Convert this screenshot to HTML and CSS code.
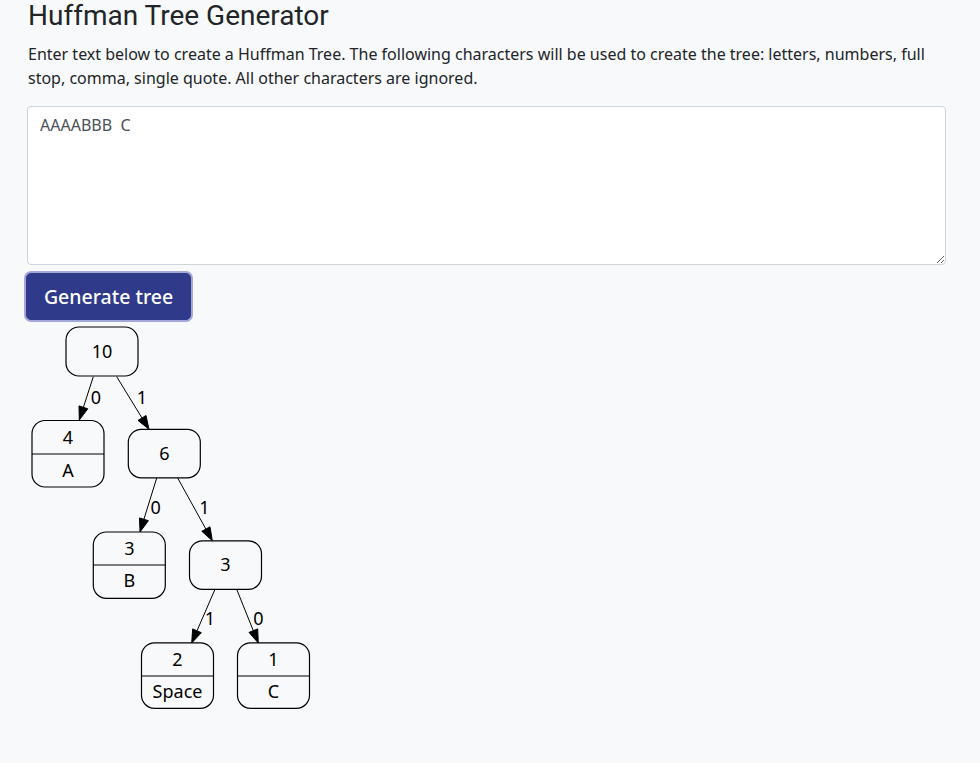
FILE: index.html
```html
<!DOCTYPE html>
<html lang="en">
<head>
<meta charset="utf-8">
<title>Huffman Tree Generator</title>
<link rel="stylesheet" href="styles.css">
</head>
<body>
<main class="page">
  <h1 class="title">Huffman Tree Generator</h1>
  <p class="intro">Enter text below to create a Huffman Tree. The following characters will be used to create the tree: letters, numbers, full stop, comma, single quote. All other characters are ignored.</p>
  <textarea class="input">AAAABBB  C</textarea>
  <div class="actions">
    <button class="btn" type="button">Generate tree</button>
  </div>
  <svg class="tree" width="320" height="400" viewBox="0 0 320 400" xmlns="http://www.w3.org/2000/svg">
    <g transform="translate(-27,-323)">
      <g class="edges">
        <line x1="93.3" y1="376.7" x2="83.4" y2="407.3"/>
        <polygon points="87.8,408.8 79.3,420 79,405.9"/>
        <line x1="116.7" y1="376.7" x2="142" y2="418"/>
        <polygon points="146,415.5 149,429.3 138,420.4"/>
        <line x1="156.7" y1="478" x2="143.9" y2="519.3"/>
        <polygon points="148.4,520.7 140,532 139.5,517.9"/>
        <line x1="177.7" y1="478" x2="205.9" y2="529.1"/>
        <polygon points="210,526.8 212.3,540.7 201.8,531.3"/>
        <line x1="215" y1="589.3" x2="197" y2="630.8"/>
        <polygon points="201.3,632.7 191.7,643 192.7,628.9"/>
        <line x1="236.7" y1="589.3" x2="253.3" y2="630.7"/>
        <polygon points="257.7,628.9 258.3,643 249,632.4"/>
      </g>
      <g class="labels">
        <text x="96" y="403.5">0</text>
        <text x="142" y="403.5">1</text>
        <text x="155.7" y="514">0</text>
        <text x="204.3" y="514">1</text>
        <text x="210" y="625">1</text>
        <text x="258.3" y="625">0</text>
      </g>
      <g class="nodes">
        <rect x="66" y="327" width="72" height="49" rx="13"/>
        <text x="102" y="358">10</text>

        <rect x="32" y="420.5" width="72" height="66.5" rx="13"/>
        <line x1="32" y1="454" x2="104" y2="454"/>
        <text x="68" y="443.5">4</text>
        <text x="68" y="476.5">A</text>

        <rect x="128.3" y="429.3" width="72" height="48.5" rx="13"/>
        <text x="164.3" y="459.5">6</text>

        <rect x="93.3" y="532" width="72" height="66.3" rx="13"/>
        <line x1="93.3" y1="565" x2="165.3" y2="565"/>
        <text x="129.3" y="555">3</text>
        <text x="129.3" y="587">B</text>

        <rect x="189.5" y="540.8" width="72" height="48.5" rx="13"/>
        <text x="225.5" y="571">3</text>

        <rect x="141.5" y="642.8" width="72" height="65.5" rx="13"/>
        <line x1="141.5" y1="676" x2="213.5" y2="676"/>
        <text x="177.5" y="665.5">2</text>
        <text x="177.5" y="697.5">Space</text>

        <rect x="237.5" y="642.8" width="72" height="65.5" rx="13"/>
        <line x1="237.5" y1="676" x2="309.5" y2="676"/>
        <text x="273.5" y="665.5">1</text>
        <text x="273.5" y="697.5">C</text>
      </g>
    </g>
  </svg>
</main>
</body>
</html>
```

FILE: styles.css
```css
html, body {
  margin: 0;
  padding: 0;
  background: #f8f9fa;
}

body {
  font-family: "Noto Sans", "Open Sans", sans-serif;
  color: #212529;
}

.page {
  padding: 0 34px 0 27px;
  display: flex;
  flex-direction: column;
  align-items: flex-start;
}

.title {
  font-family: Roboto, "Noto Sans", sans-serif;
  font-weight: 400;
  font-size: 28px;
  line-height: 32px;
  margin: 0 0 10px 1px;
}

.intro {
  font-size: 16px;
  line-height: 24px;
  margin: 0 0 16px 1px;
}

.input {
  box-sizing: border-box;
  width: 919px;
  height: 159px;
  margin: 0;
  padding: 6px 12px;
  border: 1px solid #ced4da;
  border-radius: 4px;
  background: #fff;
  font-family: "Noto Sans", sans-serif;
  font-size: 16px;
  line-height: 24px;
  color: #495057;
  resize: vertical;
  display: block;
}

.actions {
  margin-top: 8px;
}

.btn {
  box-sizing: border-box;
  margin-left: -1px;
  width: 165px;
  height: 47px;
  padding: 0 14px;
  border: 1px solid #2f3a8a;
  border-radius: 5px;
  background: #2f3a8a;
  color: #fff;
  font-family: "Noto Sans", sans-serif;
  font-size: 19.5px;
  font-weight: 500;
  box-shadow: 0 0 0 2px #a3a8d8;
  cursor: pointer;
}

.tree {
  display: block;
  margin-top: 3px;
  overflow: visible;
}

.tree .edges line {
  stroke: #000;
  stroke-width: 1;
}

.tree .edges polygon {
  fill: #000;
  stroke: #000;
  stroke-width: 1;
}

.tree .nodes rect {
  fill: none;
  stroke: #000;
  stroke-width: 1.2;
}

.tree .nodes line {
  stroke: #000;
  stroke-width: 1.2;
}

.tree text {
  font-family: "Noto Sans", sans-serif;
  font-size: 18px;
  text-anchor: middle;
  fill: #000;
}
```
